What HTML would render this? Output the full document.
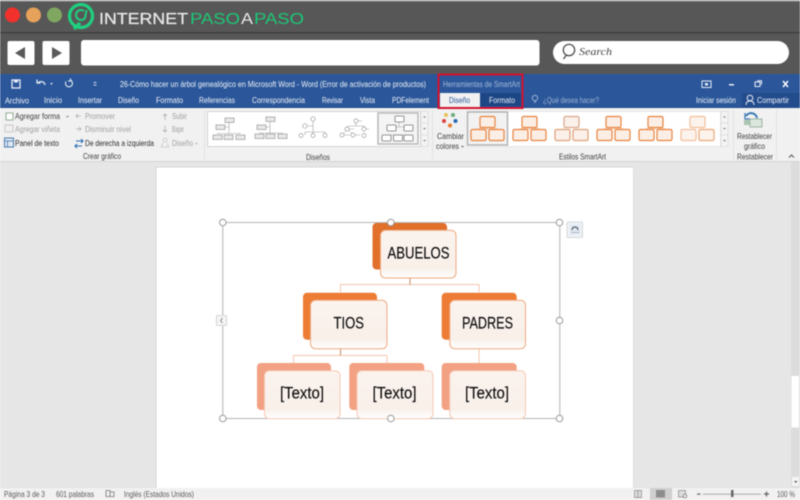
<!DOCTYPE html>
<html lang="es">
<head>
<meta charset="utf-8">
<title>Árbol genealógico en Word</title>
<style>
html,body{margin:0;padding:0;background:#fff;width:800px;height:500px;overflow:hidden}
svg{display:block;filter:blur(.4px)}
text{font-family:"Liberation Sans",sans-serif;font-size:8.6px;fill:#404040}
.w text,text.w{fill:#eef2f8}
.g text,text.g{fill:#a0a0a0}
.d{fill:#2a2a2a}
.big{font-size:16.500px;fill:#0c0c0c;stroke:#0c0c0c;stroke-width:.15}
</style>
</head>
<body>
<svg width="800" height="500" viewBox="0 0 800 500" xmlns="http://www.w3.org/2000/svg">
<defs>
<linearGradient id="fr" x1="0" y1="0" x2="0" y2="1"><stop offset="0" stop-color="#fbf3ee"/><stop offset=".8" stop-color="#f9f0ea"/><stop offset="1" stop-color="#fff"/></linearGradient>
<g id="th"><rect x="10" y="0" width="15" height="11" rx="1.500" fill="#fbeee5" stroke="#e8843f" stroke-width="1.200"/><rect x="1" y="13" width="15" height="11" rx="1.500" fill="#fbeee5" stroke="#e8843f" stroke-width="1.200"/><rect x="19" y="13" width="15" height="11" rx="1.500" fill="#fbeee5" stroke="#e8843f" stroke-width="1.200"/><path d="M17.500 11v2M8 13v-1h19v1" stroke="#f0b48c" stroke-width=".7" fill="none"/></g>
<g id="th2"><rect x="10" y="0" width="15" height="11" rx="1.500" fill="#fbf0ea" stroke="#d9a88c" stroke-width="1.200"/><rect x="1" y="13" width="15" height="11" rx="1.500" fill="#fbf0ea" stroke="#e0a078" stroke-width="1.200"/><rect x="19" y="13" width="15" height="11" rx="1.500" fill="#fbf0ea" stroke="#e0a078" stroke-width="1.200"/></g>
<g id="th3"><rect x="10" y="0" width="15" height="11" rx="1.500" fill="#fcf3ed" stroke="#f3bf9c" stroke-width="1.200"/><rect x="1" y="13" width="15" height="11" rx="1.500" fill="#fcf3ed" stroke="#f3bf9c" stroke-width="1.200"/><rect x="19" y="13" width="15" height="11" rx="1.500" fill="#fcf3ed" stroke="#eda877" stroke-width="1.200"/></g>
<g id="nb"><rect width="9" height="4.500" fill="#e8e8e8" stroke="#888" stroke-width=".6"/></g>
<circle id="h" r="3.300" fill="#fff" stroke="#999" stroke-width="1"/>
</defs>

<!-- browser chrome -->
<rect width="800" height="74" fill="#575757"/>
<rect width="800" height="1.500" fill="#a9a9a9"/>
<rect y="32" width="800" height="1.500" fill="#3f3f3f"/>
<circle cx="12.500" cy="15" r="7.500" fill="#f2312c"/>
<circle cx="33.500" cy="15" r="7.500" fill="#e6a25a"/>
<circle cx="54.500" cy="15" r="7.500" fill="#7fa75f"/>
<circle cx="81" cy="16" r="11.500" fill="none" stroke="#1ed07f" stroke-width="3.200"/>
<path d="M74 29l6-6" stroke="#1ed07f" stroke-width="3.500"/>
<path d="M84 11a5 5 0 1 0 1 7l1.500-8" fill="none" stroke="#1ed07f" stroke-width="2"/>
<text x="99" y="24" textLength="89" lengthAdjust="spacingAndGlyphs" style="font-size:16px;fill:#e9e9e9;stroke:#e9e9e9;stroke-width:.25">INTERNET</text>
<text x="190" y="24" textLength="50" lengthAdjust="spacingAndGlyphs" style="font-size:16px;fill:#1cc877">PASO</text>
<text x="241" y="24" textLength="12" lengthAdjust="spacingAndGlyphs" style="font-size:16px;fill:#e9e9e9">A</text>
<text x="254" y="24" textLength="50" lengthAdjust="spacingAndGlyphs" style="font-size:16px;fill:#1cc877">PASO</text>

<rect x="7.500" y="41" width="27" height="24" rx="2" fill="#fff"/>
<path d="M15 53l10-6v12z" fill="#5a5a5a"/>
<rect x="42.500" y="41" width="27" height="24" rx="2" fill="#fff"/>
<path d="M62 53l-10-6v12z" fill="#5a5a5a"/>
<rect x="81" y="40" width="458.500" height="25.500" rx="3" fill="#fff"/>
<rect x="553" y="41" width="236" height="23" rx="11.500" fill="#fff"/>
<circle cx="569" cy="50" r="5.700" fill="none" stroke="#444" stroke-width="1.200"/>
<path d="M566 55.500l-2.500 3.500" stroke="#444" stroke-width="1.300"/>
<text x="579" y="55" textLength="33" lengthAdjust="spacingAndGlyphs" style="font-family:'Liberation Serif',serif;font-style:italic;font-size:11px;fill:#444">Search</text>

<!-- Word title bar -->
<rect y="74" width="800" height="34" fill="#2b579a"/>
<rect y="107" width="800" height="1.500" fill="#1f4a88"/>
<rect x="12" y="80" width="8" height="8" fill="none" stroke="#e6ecf5" stroke-width="1.300"/>
<rect x="14" y="80" width="4" height="2.500" fill="#e6ecf5"/>
<path d="M38 83a4 4 0 0 1 7 2M37 79.500v3.500h3.500" fill="none" stroke="#e6ecf5" stroke-width="1.200"/>
<path d="M50 83h3l-1.500 2z" fill="#cfd9ea"/>
<path d="M71 80.500a3.500 3.500 0 1 1-5 1M70.500 78.500v2.500h-2.500" fill="none" stroke="#e6ecf5" stroke-width="1.100"/>
<rect x="93.500" y="82" width="3" height="1" fill="#cfd9ea"/><rect x="93.500" y="84.500" width="3" height="1" fill="#cfd9ea"/>
<g class="w">
<text x="120" y="87" textLength="306" lengthAdjust="spacingAndGlyphs">26-Cómo hacer un árbol genealógico en Microsoft Word - Word (Error de activación de productos)</text>
<text x="5" y="103.500" textLength="24" lengthAdjust="spacingAndGlyphs">Archivo</text>
<text x="44" y="103" textLength="18" lengthAdjust="spacingAndGlyphs">Inicio</text>
<text x="78" y="103" textLength="24" lengthAdjust="spacingAndGlyphs">Insertar</text>
<text x="118" y="103" textLength="21" lengthAdjust="spacingAndGlyphs">Diseño</text>
<text x="156" y="103" textLength="27" lengthAdjust="spacingAndGlyphs">Formato</text>
<text x="199" y="103" textLength="36" lengthAdjust="spacingAndGlyphs">Referencias</text>
<text x="252" y="103" textLength="53" lengthAdjust="spacingAndGlyphs">Correspondencia</text>
<text x="322" y="103" textLength="21" lengthAdjust="spacingAndGlyphs">Revisar</text>
<text x="360" y="103" textLength="15" lengthAdjust="spacingAndGlyphs">Vista</text>
<text x="392" y="103" textLength="37" lengthAdjust="spacingAndGlyphs">PDFelement</text>
<text x="696" y="103" textLength="40" lengthAdjust="spacingAndGlyphs">Iniciar sesión</text>
</g>
<rect x="742" y="93" width="58" height="15" fill="#234c8c"/>
<text class="w" x="757" y="103" textLength="32" lengthAdjust="spacingAndGlyphs">Compartir</text>
<circle cx="750" cy="98" r="2.800" fill="none" stroke="#e6ecf5" stroke-width="1"/>
<path d="M746 105c0-3 2-4 4-4s4 1 4 4" fill="none" stroke="#e6ecf5" stroke-width="1"/>
<circle cx="535" cy="98" r="2.700" fill="none" stroke="#a9bcd9" stroke-width=".8"/>
<path d="M534 102h2" stroke="#a9bcd9" stroke-width="1"/>
<text x="543" y="103" textLength="56" lengthAdjust="spacingAndGlyphs" style="fill:#9db2d2">¿Qué desea hacer?</text>

<rect x="702" y="81" width="9" height="6.500" fill="none" stroke="#e6ecf5" stroke-width="1"/>
<rect x="705" y="83" width="3" height="2.500" fill="#e6ecf5"/>
<rect x="729" y="84" width="5" height="1.500" fill="#e6ecf5"/>
<rect x="755" y="82" width="5" height="4.500" fill="none" stroke="#e6ecf5" stroke-width="1"/>
<path d="M757 80.800h4.500v4" fill="none" stroke="#e6ecf5" stroke-width="1"/>
<path d="M783 81l5 6M788 81l-5 6" stroke="#fff" stroke-width="1.400"/>

<!-- contextual tabs -->
<rect x="439" y="75" width="83.500" height="33" fill="#2b579a"/>
<rect x="480" y="93" width="41" height="13.500" fill="#1d4685"/>
<rect x="440" y="93" width="40" height="14" fill="#f1f1f1"/>
<text x="443" y="87" textLength="77" lengthAdjust="spacingAndGlyphs" style="fill:#a8bcdc">Herramientas de SmartArt</text>
<text x="449" y="103" textLength="21" lengthAdjust="spacingAndGlyphs" style="fill:#2b579a">Diseño</text>
<text class="w" x="489" y="103" textLength="26" lengthAdjust="spacingAndGlyphs">Formato</text>

<!-- ribbon -->
<rect y="108" width="800" height="54" fill="#f1f1f1"/>
<rect y="161" width="800" height="1" fill="#d4d4d4"/>
<path d="M204.500 110v49M432.500 110v49M733.500 110v49M776.500 110v49" stroke="#e2e2e2"/>
<rect x="438.500" y="74.500" width="84" height="33.500" fill="none" stroke="#d4112c" stroke-width="2"/>

<rect x="6" y="113" width="7" height="7" fill="#fff" stroke="#7a9a7a" stroke-width=".8"/>
<rect x="5" y="125" width="8" height="7" fill="#f0f0f0" stroke="#c0c0c0" stroke-width=".8"/>
<rect x="4.500" y="138" width="9" height="9" fill="#dfe8f3" stroke="#3b6ea8" stroke-width=".9"/>
<path d="M4.500 141h9M7.500 141v6" stroke="#3b6ea8" stroke-width=".7"/>
<text x="15" y="119" textLength="45" lengthAdjust="spacingAndGlyphs">Agregar forma</text>
<path d="M66 116h3l-1.500 1.500z" fill="#777"/>
<text class="g" x="15" y="132" textLength="45" lengthAdjust="spacingAndGlyphs">Agregar viñeta</text>
<text x="15" y="146" textLength="44" lengthAdjust="spacingAndGlyphs" class="d">Panel de texto</text>
<path d="M81 116h-5M78 114l-2 2 2 2" fill="none" stroke="#b0b0b0" stroke-width=".8"/>
<path d="M76 129h5M79 127l2 2-2 2" fill="none" stroke="#b0b0b0" stroke-width=".8"/>
<path d="M76 141h7M81 139l2 2-2 2" fill="none" stroke="#2a6cb5" stroke-width="1.100"/>
<path d="M82 146h-7M77 144l-2 2 2 2" fill="none" stroke="#2a6cb5" stroke-width="1.100"/>
<g class="g">
<text x="85" y="119" textLength="30" lengthAdjust="spacingAndGlyphs">Promover</text>
<text x="85" y="132" textLength="46" lengthAdjust="spacingAndGlyphs">Disminuir nivel</text>
<text x="172" y="119" textLength="15" lengthAdjust="spacingAndGlyphs">Subir</text>
<text x="172" y="132" textLength="12" lengthAdjust="spacingAndGlyphs">Bajar</text>
<text x="172" y="146" textLength="21" lengthAdjust="spacingAndGlyphs">Diseño</text>
</g>
<text class="d" x="85" y="146" textLength="69" lengthAdjust="spacingAndGlyphs">De derecha a izquierda</text>
<path d="M165 120v-6M163 116l2-2 2 2" fill="none" stroke="#b5b5b5" stroke-width=".9"/>
<path d="M165 126v6M163 130l2 2 2-2" fill="none" stroke="#b5b5b5" stroke-width=".9"/>
<circle cx="165" cy="140" r="2" fill="none" stroke="#c5c5c5" stroke-width=".8"/>
<path d="M161 147l2-4M169 147l-2-4M161 147h8" fill="none" stroke="#c5c5c5" stroke-width=".8"/>
<path d="M195 143h3l-1.500 1.500z" fill="#aaa"/>
<text x="83" y="159" textLength="38" lengthAdjust="spacingAndGlyphs">Crear gráfico</text>

<!-- layout gallery -->
<rect x="207.500" y="111.500" width="213" height="35" fill="#fff" stroke="#d4d4d4"/>
<rect x="421" y="111.500" width="7" height="35" fill="#f4f4f4" stroke="#d8d8d8" stroke-width=".7"/>
<path d="M421 123h7M421 135h7" stroke="#d8d8d8" stroke-width=".7"/>
<path d="M423 117.500h3l-1.500-1.500zM423 128h3l-1.500 1.500z" fill="#777"/>
<path d="M423 140h3l-1.500 1.500z" fill="#777"/>
<rect x="378" y="113" width="40" height="31" fill="#f5f5f5" stroke="#b5b5b5" stroke-width="1.400"/>
<g>
<path d="M229 122.500v10M217 133.500h23M218 134v-1M229 134v-1M240 134v-1M225 127h4" fill="none" stroke="#a0a0a0" stroke-width=".6"/>
<use href="#nb" x="225" y="118"/><use href="#nb" x="216" y="125"/><use href="#nb" x="213" y="135"/><use href="#nb" x="224" y="135"/><use href="#nb" x="236" y="135"/>
<path d="M270 120v13M259 133h24M265 127h5" fill="none" stroke="#a0a0a0" stroke-width=".6"/>
<use href="#nb" x="266" y="117"/><use href="#nb" x="257" y="125"/><use href="#nb" x="255" y="134"/><use href="#nb" x="266" y="134"/><use href="#nb" x="278" y="134"/>
<path d="M313 119v17M305 132h20M305 132v3M325 132v3M308 126h5" fill="none" stroke="#a0a0a0" stroke-width=".6"/>
<g fill="#fff" stroke="#999" stroke-width=".7"><circle cx="313" cy="119" r="2.200"/><circle cx="305" cy="126" r="2.200"/><circle cx="301" cy="135.500" r="2"/><circle cx="313" cy="135.500" r="2"/><circle cx="325" cy="135.500" r="2"/></g>
<path d="M356 121v5M348 126h16M348 126v3M364 126v3M356 121h6M348 129h6M364 129h5M342 135h8M354 135h6" fill="none" stroke="#a0a0a0" stroke-width=".6"/>
<path d="M342 135l6-6M353 135l-5-6" fill="none" stroke="#a0a0a0" stroke-width=".5"/>
<g fill="#fff" stroke="#999" stroke-width=".7"><circle cx="356" cy="121" r="2"/><circle cx="347" cy="129" r="2"/><circle cx="364" cy="129" r="2"/><circle cx="342" cy="135" r="2"/><circle cx="353" cy="135" r="2"/><circle cx="364" cy="135.500" r="2"/></g>
<path d="M399 122v5M391 127h18M386 137v-2h24v2" fill="none" stroke="#aaa" stroke-width=".6"/>
<g fill="#fff" stroke="#777" stroke-width=".8"><rect x="395" y="116" width="9" height="6" rx="1"/><rect x="387" y="125" width="9" height="6" rx="1"/><rect x="404" y="125" width="9" height="6" rx="1"/><rect x="382" y="135" width="9" height="6" rx="1"/><rect x="393.500" y="135" width="9" height="6" rx="1"/><rect x="404" y="135" width="9" height="6" rx="1"/></g>
</g>
<text x="306" y="160" textLength="24" lengthAdjust="spacingAndGlyphs">Diseños</text>

<!-- colours -->
<circle cx="446" cy="115" r="2" fill="#e8c35a"/>
<circle cx="453" cy="115" r="2" fill="#6bab7b"/>
<circle cx="444" cy="121" r="2" fill="#d9443a"/>
<circle cx="455.500" cy="121" r="2" fill="#2769b3"/>
<circle cx="450" cy="125.500" r="2" fill="#e87a2c"/>
<text x="437" y="139" textLength="27" lengthAdjust="spacingAndGlyphs">Cambiar</text>
<text x="436" y="149" textLength="23" lengthAdjust="spacingAndGlyphs">colores</text>
<path d="M461 146h3l-1.500 1.500z" fill="#555"/>

<!-- styles gallery -->
<rect x="467.500" y="111.500" width="253" height="35" fill="#fff" stroke="#e6e6e6"/>
<rect x="467.500" y="112" width="40" height="33" fill="#f2f2f2" stroke="#b0b0b0" stroke-width="1.400"/>
<use href="#th" x="470" y="116.500"/>
<use href="#th" x="512" y="116.500"/>
<use href="#th2" x="554" y="116.500"/>
<use href="#th" x="596" y="116.500"/>
<use href="#th" x="638" y="116.500"/>
<use href="#th3" x="680" y="116.500"/>
<rect x="721" y="111.500" width="7" height="35" fill="#f4f4f4" stroke="#d8d8d8" stroke-width=".7"/>
<path d="M721 123h7M721 135h7" stroke="#d8d8d8" stroke-width=".7"/>
<path d="M723 117.500h3l-1.500-1.500zM723 128h3l-1.500 1.500zM723 140h3l-1.500 1.500z" fill="#777"/>
<text x="559" y="159.500" textLength="47" lengthAdjust="spacingAndGlyphs">Estilos SmartArt</text>

<!-- reset -->
<path d="M746 116a6 6 0 0 1 11 2" fill="none" stroke="#3c7ab5" stroke-width="2"/>
<path d="M745 113v6h5" fill="none" stroke="#3c7ab5" stroke-width="1.300"/>
<rect x="750" y="119" width="12" height="8" fill="#dbe6dd" stroke="#8fa594" stroke-width=".8"/>
<rect x="744" y="120" width="6" height="5" fill="#a9c4b0"/>
<text x="737" y="139" textLength="35" lengthAdjust="spacingAndGlyphs">Restablecer</text>
<text x="744" y="149" textLength="21" lengthAdjust="spacingAndGlyphs">gráfico</text>
<text x="737" y="159.500" textLength="36" lengthAdjust="spacingAndGlyphs">Restablecer</text>
<path d="M789 157.500l2.500-2.500 2.500 2.500" fill="none" stroke="#555" stroke-width="1"/>

<!-- document area -->
<rect y="162" width="791" height="326" fill="#e6e6e6"/>
<rect x="791" y="162" width="9" height="326" fill="#dcdcdc"/>
<rect x="791.500" y="376" width="7.500" height="51.500" fill="#fff"/>
<rect x="792" y="477" width="7" height="9" fill="#f4f4f4"/>
<path d="M794 481h3.500l-1.750 2z" fill="#555"/>
<rect x="155.500" y="166.500" width="478" height="322" fill="#d6d6d6"/>
<rect x="156.500" y="167.500" width="476.500" height="321" fill="#fff"/>

<!-- SmartArt -->
<rect x="222.800" y="222.500" width="337" height="196" fill="none" stroke="#b4b4b4" stroke-width="1"/>
<path d="M340.500 292v-7.500h138.500v7.500M293.500 363v-7.500h93.500v7.500M479 349v14" fill="none" stroke="#f3c6ae" stroke-width="1"/>
<path d="M410 278v7M340.500 349v6.500" stroke="#c98a64" stroke-width="1" fill="none"/>

<rect x="372.500" y="223" width="74.500" height="46.500" rx="4" fill="#e0702a"/>
<rect x="380.500" y="230.300" width="75.500" height="47.700" rx="5" fill="url(#fr)" stroke="#eeaa80"/>
<rect x="303" y="292.700" width="74" height="47" rx="4" fill="#ed7c34"/>
<rect x="310.500" y="300.300" width="76.500" height="48.400" rx="5" fill="url(#fr)" stroke="#eeaa80"/>
<rect x="441.700" y="292.700" width="75" height="47" rx="4" fill="#ed7c34"/>
<rect x="449.800" y="300.300" width="75.700" height="48.400" rx="5" fill="url(#fr)" stroke="#eeaa80"/>
<rect x="257" y="363" width="74" height="47" rx="4" fill="#f2a183"/>
<rect x="264.500" y="370.700" width="75.500" height="48" rx="5" fill="url(#fr)" stroke="#f6c9b5"/>
<rect x="349.300" y="363" width="75" height="47" rx="4" fill="#f2a183"/>
<rect x="357" y="370.700" width="76" height="48" rx="5" fill="url(#fr)" stroke="#f6c9b5"/>
<rect x="441.700" y="363" width="75" height="47" rx="4" fill="#f2a183"/>
<rect x="449.800" y="370.700" width="75.700" height="48" rx="5" fill="url(#fr)" stroke="#f6c9b5"/>

<text class="big" x="387.500" y="258.500" textLength="62" lengthAdjust="spacingAndGlyphs">ABUELOS</text>
<text class="big" x="333.500" y="328.500" textLength="30.500" lengthAdjust="spacingAndGlyphs">TIOS</text>
<text class="big" x="462" y="328.500" textLength="51" lengthAdjust="spacingAndGlyphs">PADRES</text>
<text class="big" x="280" y="398.500" textLength="44" lengthAdjust="spacingAndGlyphs">[Texto]</text>
<text class="big" x="372.500" y="398.500" textLength="44" lengthAdjust="spacingAndGlyphs">[Texto]</text>
<text class="big" x="465" y="398.500" textLength="44" lengthAdjust="spacingAndGlyphs">[Texto]</text>

<use href="#h" x="222.800" y="222.500"/><use href="#h" x="390.800" y="222.500"/><use href="#h" x="559.500" y="222.500"/>
<use href="#h" x="559.500" y="320.500"/>
<use href="#h" x="222.800" y="418.500"/><use href="#h" x="390.800" y="418.500"/><use href="#h" x="559.500" y="418.500"/>

<rect x="216.500" y="315.500" width="10" height="10" rx="1" fill="#f5f5f5" stroke="#d5d5d5"/>
<path d="M222.500 318l-2 2.500 2 2.500" fill="none" stroke="#777" stroke-width=".8"/>
<rect x="567" y="222" width="15.500" height="15.500" rx="1" fill="#eef1f5" stroke="#d5d8dc"/>
<rect x="570" y="225" width="10" height="9" fill="#dfe7f0"/>
<path d="M572 230a3 3 0 0 1 6 0" fill="none" stroke="#333c4a" stroke-width="1"/>
<path d="M571 232.500h8" stroke="#9ab" stroke-width=".7"/>

<!-- status bar -->
<rect y="488" width="800" height="12" fill="#f1f1f1"/>
<g style="opacity:.85">
<text x="4" y="497" textLength="41" lengthAdjust="spacingAndGlyphs">Página 3 de 3</text>
<text x="56" y="497" textLength="38" lengthAdjust="spacingAndGlyphs">601 palabras</text>
<text x="124" y="497" textLength="70" lengthAdjust="spacingAndGlyphs">Inglés (Estados Unidos)</text>
<text x="777" y="497" textLength="18" lengthAdjust="spacingAndGlyphs">100 %</text>
</g>
<path d="M106 490.500h4v6h-4zM110 492h4v4.500h-4" fill="none" stroke="#777" stroke-width=".8"/>
<rect x="650" y="488" width="22" height="12" fill="#cfcfcf"/>
<rect x="656" y="490" width="9" height="7.500" fill="#8d8d8d"/>
<path d="M634.500 490.500h3.500v7h-3.500zM638 490.500h3.500v7h-3.500z" fill="#ddd" stroke="#888" stroke-width=".7"/>
<rect x="678.500" y="490.500" width="7" height="6.500" fill="#ddd" stroke="#888" stroke-width=".7"/>
<circle cx="685" cy="496" r="1.800" fill="#f1f1f1" stroke="#666" stroke-width=".7"/>
<rect x="697" y="493.500" width="3.500" height="1.200" fill="#666"/>
<rect x="703" y="493.700" width="58" height="1" fill="#aaa"/>
<rect x="731" y="490" width="2.500" height="7" fill="#666"/>
<path d="M764 494h5M766.500 491.500v5" stroke="#666" stroke-width="1.200"/>
</svg>
</body>
</html>
